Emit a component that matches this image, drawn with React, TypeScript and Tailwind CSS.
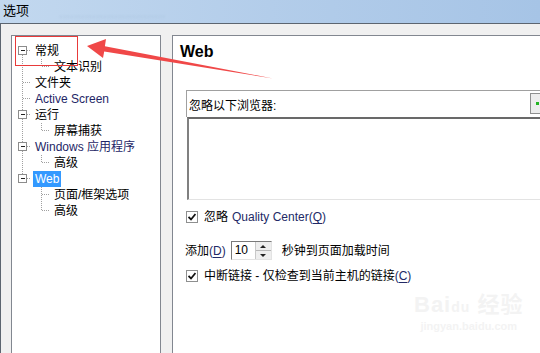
import React from 'react'

type CellProps = { up?: boolean; down?: boolean; right?: boolean; box?: boolean }

function Cell({ up, down, right, box }: CellProps) {
  const dot = { stroke: '#a0a0a0', strokeDasharray: '1 1' }
  return (
    <svg width="19" height="16" viewBox="0 0 19 16" shapeRendering="crispEdges" className="shrink-0">
      {up && <line x1="10.5" y1="0" x2="10.5" y2={box ? 3 : 8} {...dot} />}
      {down && <line x1="10.5" y1={box ? 12 : 8} x2="10.5" y2="16" {...dot} />}
      {right && <line x1={box ? 15 : 11} y1="7.5" x2="19" y2="7.5" {...dot} />}
      {box && (
        <>
          <rect x="6.5" y="3.5" width="8" height="8" fill="#fff" stroke="#8c8c8c" />
          <line x1="8.5" y1="7.5" x2="13" y2="7.5" stroke="#222" />
        </>
      )}
    </svg>
  )
}

type Row = {
  label: string
  c0: CellProps
  c1?: CellProps
  selected?: boolean
}

const rows: Row[] = [
  { label: '常规', c0: { box: true, down: true, right: true } },
  { label: '文本识别', c0: { up: true, down: true }, c1: { up: true, right: true } },
  { label: '文件夹', c0: { up: true, down: true, right: true } },
  { label: 'Active Screen', c0: { up: true, down: true, right: true } },
  { label: '运行', c0: { box: true, up: true, down: true, right: true } },
  { label: '屏幕捕获', c0: { up: true, down: true }, c1: { up: true, right: true } },
  { label: 'Windows 应用程序', c0: { box: true, up: true, down: true, right: true } },
  { label: '高级', c0: { up: true, down: true }, c1: { up: true, right: true } },
  { label: 'Web', c0: { box: true, up: true, right: true }, selected: true },
  { label: '页面/框架选项', c0: {}, c1: { up: true, down: true, right: true } },
  { label: '高级', c0: {}, c1: { up: true, right: true } },
]

function Check() {
  return (
    <div className="w-[12px] h-[12px] border border-[#8e8f8f] bg-white flex items-center justify-center shrink-0">
      <svg width="8" height="8" viewBox="0 0 8 8">
        <path d="M0.5 4 L3 6.5 L7.5 1" fill="none" stroke="#111" strokeWidth="1.8" />
      </svg>
    </div>
  )
}

function Key({ k }: { k: string }) {
  return (
    <span className="text-[#222a66]">
      (<span className="underline underline-offset-2">{k}</span>)
    </span>
  )
}

export default function App() {
  return (
    <div className="relative w-[540px] h-[353px] overflow-hidden flex flex-col bg-[#aac8ea] font-['Liberation_Sans','Noto_Sans_CJK_SC',sans-serif] text-[12px] leading-[16px] text-black">
      {/* title bar */}
      <div className="h-[23px] shrink-0 flex items-start pl-[3px] pt-[3px] bg-gradient-to-r from-[#c2d8ef] via-[#b3cdea] to-[#a6c4e6]">
        <span className="text-[13px]">选项</span>
        <span className="ml-[30px] mt-[5px] text-[11px] text-[#a3bdd8] blur-[1px]">·····························</span>
      </div>

      <div className="flex-1 flex">
        <div className="w-[2px] bg-[#aac8ea]" />
        <div className="flex-1 flex gap-[11px] border-l border-t border-[#5c6570] bg-[#f0f0f0] pt-[11px] pl-[10px]">
          {/* tree panel */}
          <div className="w-[150px] -mb-[2px] border border-[#828790] bg-white pt-[7px] flex flex-col">
            {rows.map((r, i) => (
              <div key={i} className="h-[16px] flex items-center">
                <Cell {...r.c0} />
                {r.c1 && <Cell {...r.c1} />}
                {r.selected ? (
                  <span className="ml-[2px] px-[2px] bg-[#3399ff] text-white">{r.label}</span>
                ) : (
                  <span className={`ml-[4px] whitespace-nowrap ${/^[A-Z]/.test(r.label) ? 'text-[#1e2666]' : ''}`}>
                    {r.label}
                  </span>
                )}
              </div>
            ))}
          </div>

          {/* right panel */}
          <div className="flex-1 -mr-[4px] -mb-[2px] border border-[#828790] bg-white pl-[7px] pt-[7px] flex flex-col">
            <div className="text-[16px] leading-[18px] font-bold">Web</div>

            <div className="ml-[6px] mt-[29px] w-[360px] flex flex-col">
              <div className="h-[27px] border-l border-t border-[#a0a0a0] flex items-start">
                <div className="flex-1 self-end pb-[3px] pl-[2px]">忽略以下浏览器:</div>
                <div className="w-[22px] h-[21px] mt-[2px] -mr-[6px] border border-[#8e8f8f] bg-[#ececec] flex items-center pl-[5px]">
                  <div className="w-[3px] h-[3px] bg-[#22b422]" />
                </div>
              </div>
              <div className="h-[83px] ml-[1px] border-t-2 border-l-2 border-t-[#696969] border-l-[#808080] border-b border-b-[#e3e3e3] bg-white" />
            </div>

            <div className="ml-[6px] mt-[9px] h-[16px] flex items-center">
              <Check />
              <span className="ml-[6px]">忽略 </span>
              <span className="ml-[4px] text-[#222a66]">
                Quality Center(<span className="underline underline-offset-2">Q</span>)
              </span>
            </div>

            <div className="ml-[5px] mt-[16px] h-[19px] flex items-center">
              <span>
                添加<Key k="D" />
              </span>
              <div className="ml-[5px] w-[41px] h-[19px] flex border border-[#7a7a7a] border-b-[#e3e3e3] border-r-[#e3e3e3] bg-white">
                <span className="flex-1 pl-[3px] leading-[17px]">10</span>
                <div className="w-[16px] flex flex-col border-l border-[#c8c8c8]">
                  <div className="flex-1 bg-[#eeeeee] border-b border-[#b8b8b8] flex items-center justify-center">
                    <div className="w-0 h-0 border-l-[3px] border-r-[3px] border-b-[3px] border-l-transparent border-r-transparent border-b-[#222]" />
                  </div>
                  <div className="flex-1 bg-[#eeeeee] flex items-center justify-center">
                    <div className="w-0 h-0 border-l-[3px] border-r-[3px] border-t-[3px] border-l-transparent border-r-transparent border-t-[#222]" />
                  </div>
                </div>
              </div>
              <span className="ml-[10px]">秒钟到页面加载时间</span>
            </div>

            <div className="ml-[6px] mt-[8px] h-[16px] flex items-center">
              <Check />
              <span className="ml-[6px]">中断链接 - 仅检查到当前主机的链接</span>
              <Key k="C" />
            </div>
          </div>
        </div>
      </div>

      {/* annotation overlay */}
      <div className="absolute left-[15px] top-[36px] w-[63px] h-[30px] border border-[#e83a3a]" />
      <svg className="absolute left-0 top-0" width="540" height="353" viewBox="0 0 540 353">
        <polygon points="87,46 106,39 104.9,46.3 273,78.5 104.2,51.6 103,58" fill="#f04848" />
      </svg>

      {/* watermark */}
      <div className="absolute left-[414px] top-[293px] flex flex-col items-center text-[#f3f3f3]">
        <div className="text-[22px] leading-[24px] font-bold tracking-[1px]">Bai<span className="text-[14px]">du</span> 经验</div>
        <div className="text-[11px] leading-[14px] font-bold">jingyan.baidu.com</div>
      </div>
    </div>
  )
}
